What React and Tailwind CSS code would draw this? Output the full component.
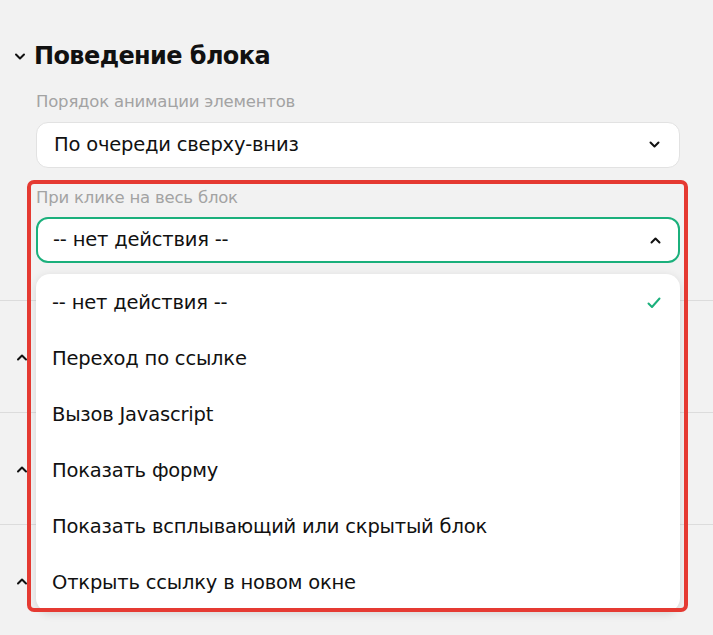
const Chevron = ({ up, className = "" }) => (
  <svg viewBox="0 0 12 8" className={className} fill="none" stroke="currentColor" strokeWidth="2" strokeLinecap="round" strokeLinejoin="round">
    <path d={up ? "M2 6.5L6 2.5L10 6.5" : "M2 1.5L6 5.5L10 1.5"} />
  </svg>
);

const options = [
  "-- нет действия --",
  "Переход по ссылке",
  "Вызов Javascript",
  "Показать форму",
  "Показать всплывающий или скрытый блок",
  "Открыть ссылку в новом окне",
];

export default function App() {
  return (
    <div className="relative w-[713px] h-[635px] overflow-hidden bg-[#f2f2f2] text-[#111]" style={{ fontFamily: "'DejaVu Sans', Inter, sans-serif" }}>
      <div className="pt-[38px] pl-[14px] pr-[33px]">
        <div className="flex items-center gap-[8px]">
          <Chevron className="w-[12px] h-[8px] mt-[2px]" />
          <h2 className="text-[24px] font-bold tracking-[-0.6px]">Поведение блока</h2>
        </div>
        <div className="pl-[22px]">
          <div className="mt-[16px] text-[16.5px] text-[#a3a3a3] tracking-[-0.2px]">Порядок анимации элементов</div>
          <div className="mt-[7px] h-[46px] rounded-[12px] bg-white border border-[#e2e2e2] flex items-center justify-between pl-[17px] pr-[18px]">
            <span className="text-[19.5px] tracking-[-0.2px]">По очереди сверху-вниз</span>
            <Chevron className="w-[13px] h-[8px]" />
          </div>
          <div className="mt-[18px] text-[16.5px] text-[#a3a3a3] tracking-[-0.2px]">При клике на весь блок</div>
          <div className="mt-[6px] h-[46px] rounded-[12px] bg-white border-2 border-[#1bb07c] flex items-center justify-between pl-[15px] pr-[16px]">
            <span className="text-[19.5px] tracking-[-0.2px]">-- нет действия --</span>
            <Chevron up className="w-[13px] h-[8px]" />
          </div>
        </div>
      </div>
      <div className="mt-[37px]">
        {[0, 1, 2].map((i) => (
          <div key={i} className="h-[112px] border-t border-[#dcdcdc] flex items-center pl-[16px]">
            <Chevron up className="w-[12px] h-[8px] mt-[2px]" />
          </div>
        ))}
      </div>

      <div className="absolute left-[36px] top-[274px] w-[644px] rounded-[14px] bg-white shadow-[0_2px_8px_rgba(0,0,0,0.12)] py-[1px]">
        {options.map((o, i) => (
          <div key={o} className="h-[56px] flex items-center justify-between pl-[16px] pr-[19px] text-[19.5px] tracking-[-0.2px]">
            <span>{o}</span>
            {i === 0 && (
              <svg viewBox="0 0 14 12" className="w-[14px] h-[12px]" fill="none" stroke="#1bb07c" strokeWidth="2" strokeLinecap="round" strokeLinejoin="round">
                <path d="M1.5 6.5L5 10L12.5 1.5" />
              </svg>
            )}
          </div>
        ))}
      </div>

      <div className="absolute left-[27px] top-[180px] w-[661px] h-[432px] rounded-[7px] border-4 border-[#e53a32] pointer-events-none" />
    </div>
  );
}
